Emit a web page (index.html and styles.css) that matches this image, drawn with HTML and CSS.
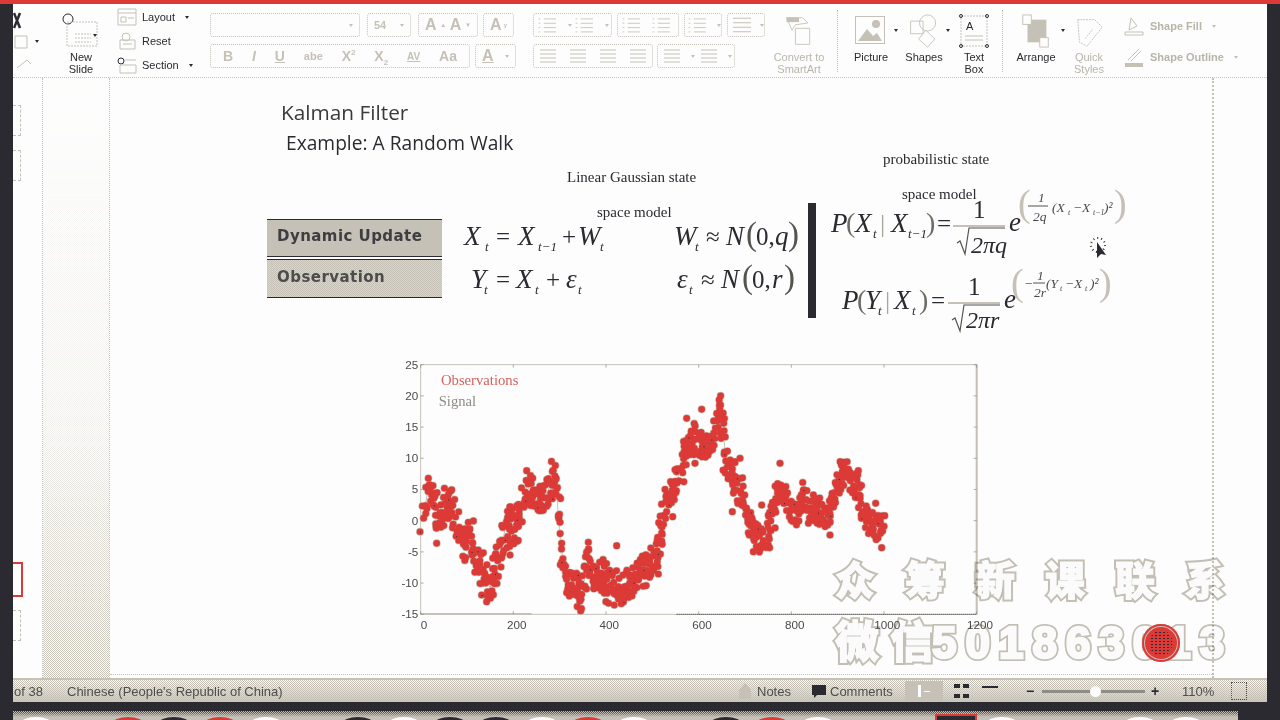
FILE: index.html
```html
<!DOCTYPE html>
<html lang="en">
<head>
  <meta charset="UTF-8">
  <title>Kalman Filter</title>
  <link rel="stylesheet" href="styles.css">
</head>
<body>

  <svg class="defs" width="0" height="0">
    <symbol id="lines" viewBox="0 0 20 16"><path d="M2 2h16M2 6h16M2 10h16M2 14h16"/></symbol>
    <symbol id="bullets" viewBox="0 0 30 20"><path d="M9 3h14M9 8h14M9 13h14M9 18h14M3 3h2M3 8h2M3 13h2M3 18h2"/></symbol>
  </svg>

  <div class="redbar"></div>

  <div class="app">
    <div class="ribbon">
      <div class="clip">
        <svg width="26" height="70" viewBox="0 0 26 70"><path class="dark thick" d="M1 5l6 15M7 5L1 20"/><path d="M2 28h12v12H2zM4 60l10-8M14 52l4 4"/></svg>
        <span class="caret clip-caret"></span>
      </div>

      <div class="newslide">
        <svg width="40" height="38" viewBox="0 0 40 38"><circle class="dark" cx="9" cy="9" r="5"/><path d="M8 12h30v24H8zM16 24h16M16 28h16M16 32h16" stroke-dasharray="2 1"/></svg>
        <span class="caret newslide-caret"></span>
        <span class="label">New<br>Slide</span>
      </div>

      <div class="slidelist">
        <div class="listrow"><svg width="20" height="18" viewBox="0 0 20 18"><path d="M1 1h18v16H1zM1 5h18M4 9h5v5H4zM11 10h6"/></svg><span>Layout</span><span class="caret"></span></div>
        <div class="listrow"><svg width="20" height="18" viewBox="0 0 20 18"><circle cx="9" cy="5" r="4"/><path d="M3 8h15v9H3zM6 12h9"/></svg><span>Reset</span></div>
        <div class="listrow"><svg width="20" height="18" viewBox="0 0 20 18"><circle class="dark" cx="4" cy="5" r="3"/><path d="M3 9h16v8H3zM8 4h11"/></svg><span>Section</span><span class="caret"></span></div>
      </div>

      <div class="fontgroup">
        <div class="rbrow">
          <div class="rb fontname"><span class="caret faded"></span></div>
          <div class="rb fontsize">54<span class="caret faded"></span></div>
          <div class="rb growshrink">A<small>▲</small> A<small>▼</small></div>
          <div class="rb clearfmt">A<small>y</small></div>
        </div>
        <div class="rbrow">
          <div class="rb fontstyles">
            <b>B</b><i>I</i><u>U</u><span class="abe">abe</span><span>X<sup>2</sup></span><span>X<sub>2</sub></span><span class="spacing">AV</span><span>Aa</span>
          </div>
          <div class="rb fontcolor"><u>A</u><span class="caret faded"></span></div>
        </div>
      </div>

      <div class="paragroup">
        <div class="rbrow">
          <div class="rb para-a"><svg width="26" height="18"><use href="#bullets"/></svg><span class="caret faded"></span><svg width="26" height="18"><use href="#bullets"/></svg><span class="caret faded"></span></div>
          <div class="rb para-b"><svg width="26" height="18"><use href="#bullets"/></svg><svg width="26" height="18"><use href="#bullets"/></svg></div>
          <div class="rb para-c"><svg width="26" height="18"><use href="#bullets"/></svg><span class="caret faded"></span></div>
          <div class="rb para-c"><svg width="26" height="18"><use href="#lines"/></svg><span class="caret faded"></span></div>
        </div>
        <div class="rbrow">
          <div class="rb para-d"><svg width="20" height="16"><use href="#lines"/></svg><svg width="20" height="16"><use href="#lines"/></svg><svg width="20" height="16"><use href="#lines"/></svg><svg width="20" height="16"><use href="#lines"/></svg></div>
          <div class="rb para-e"><svg width="24" height="16"><use href="#lines"/></svg><span class="caret faded"></span><svg width="24" height="16"><use href="#lines"/></svg><span class="caret faded"></span></div>
        </div>
      </div>

      <div class="tool smartart">
        <svg width="32" height="34" viewBox="0 0 36 38"><path d="M4 4h18l6 6-14 2-4 6zM14 16h16v18H14z"/><path class="fill" d="M4 4h14v5H4z"/></svg>
        <span class="label faded">Convert to<br>SmartArt</span>
      </div>

      <div class="sep sep-a"></div>

      <div class="tool picture">
        <svg width="34" height="34" viewBox="0 0 34 34"><rect x="1.5" y="2.5" width="29" height="27"/><path class="fill" d="M4 27l9-12 6 7 4-3 5 8z"/><circle class="fill" cx="22" cy="10" r="4"/></svg>
        <span class="caret tool-caret"></span>
        <span class="label">Picture</span>
      </div>
      <div class="tool shapes">
        <svg width="34" height="34" viewBox="0 0 34 38"><circle cx="21" cy="10" r="9"/><path d="M2 8h14v14H2zM19 18l10 10-8 9-10-9z"/></svg>
        <span class="caret tool-caret"></span>
        <span class="label">Shapes</span>
      </div>
      <div class="tool textbox">
        <svg width="30" height="34" viewBox="0 0 30 34"><rect x="2" y="2" width="26" height="30" stroke-dasharray="2 1"/><circle class="dark" cx="2" cy="2" r="1.5"/><circle class="dark" cx="28" cy="2" r="1.5"/><circle class="dark" cx="2" cy="32" r="1.5"/><circle class="dark" cx="28" cy="32" r="1.5"/><path d="M6 22h18M6 26h18"/><text class="boxa" x="7" y="16">A</text></svg>
        <span class="label">Text<br>Box</span>
      </div>

      <div class="sep sep-b"></div>

      <div class="tool arrange">
        <svg width="30" height="34" viewBox="0 0 30 36"><path class="fill" d="M6 6h20v24H6z"/><rect class="paper" x="1" y="1" width="9" height="10"/><rect class="paper" x="19" y="25" width="9" height="10"/></svg>
        <span class="caret tool-caret"></span>
        <span class="label">Arrange</span>
      </div>
      <div class="tool quick">
        <svg width="34" height="34" viewBox="0 0 36 36" stroke-dasharray="2 1"><path d="M6 6h18l8 8-16 20-8-4z"/><path d="M14 26l8-10"/></svg>
        <span class="label faded">Quick<br>Styles</span>
      </div>
      <div class="shapelist">
        <div class="listrow faded"><svg width="22" height="22" viewBox="0 0 22 22"><path d="M8 3l6 8-8 4zM2 17h18v3H2z"/></svg><span>Shape Fill</span><span class="caret faded"></span></div>
        <div class="listrow faded"><svg width="22" height="22" viewBox="0 0 22 22"><path d="M5 14L16 3M8 15L18 5"/><path class="fill" d="M2 17h18v4H2z"/></svg><span>Shape Outline</span><span class="caret faded"></span></div>
      </div>
    </div>

    <div class="workspace">
      <div class="thumbs">
        <div class="thumb"></div>
        <div class="thumb"></div>
        <div class="thumb current"></div>
        <div class="thumb"></div>
      </div>
      <div class="gutter"></div>

      <div class="slide">
        <div class="title">Kalman Filter</div>
        <div class="subtitle">Example: A Random Walk</div>
        <div class="caption cap-linear">Linear Gaussian state</div>
        <div class="caption cap-space1">space model</div>
        <div class="caption cap-prob">probabilistic state</div>
        <div class="caption cap-space2">space model</div>

        <div class="statebox dyn">Dynamic Update</div>
        <div class="statebox obs">Observation</div>
        <div class="divider"></div>

        <svg class="equations" width="1102" height="600" viewBox="110 78 1102 600">
          <text class="mi" x="464" y="245">X</text><text class="ss" x="485" y="251">t</text>
          <text class="mn" x="496" y="245">=</text>
          <text class="mi" x="518" y="245">X</text><text class="ss" x="538" y="251">t−1</text>
          <text class="mn" x="562" y="245">+</text>
          <text class="mi" x="578" y="245">W</text><text class="ss" x="600" y="251">t</text>

          <text class="mi" x="674" y="245">W</text><text class="ss" x="695" y="251">t</text>
          <text class="mn" x="706" y="245">≈</text>
          <text class="mi" x="726" y="245">N</text>
          <text class="paren" x="746" y="245">(</text><text class="mn" x="756" y="245">0,</text><text class="mi" x="775" y="245">q</text><text class="paren" x="788" y="245">)</text>

          <text class="mi" x="471" y="288">Y</text><text class="ss" x="484" y="294">t</text>
          <text class="mn" x="496" y="288">=</text>
          <text class="mi" x="516" y="288">X</text><text class="ss" x="535" y="294">t</text>
          <text class="mn" x="546" y="288">+</text>
          <text class="mi" x="566" y="288">ε</text><text class="ss" x="578" y="294">t</text>

          <text class="mi" x="677" y="288">ε</text><text class="ss" x="689" y="294">t</text>
          <text class="mn" x="701" y="288">≈</text>
          <text class="mi" x="721" y="288">N</text>
          <text class="paren" x="742" y="288">(</text><text class="mn" x="752" y="288">0,</text><text class="mi" x="772" y="288">r</text><text class="paren" x="784" y="288">)</text>

          <text class="mi" x="831" y="232">P</text><text class="parens" x="846" y="232">(</text>
          <text class="mi" x="855" y="232">X</text><text class="ss" x="873" y="238">t</text>
          <text class="bar" x="880" y="232">|</text>
          <text class="mi" x="891" y="232">X</text><text class="ss" x="908" y="238">t−1</text>
          <text class="parens" x="926" y="232">)</text><text class="mn" x="937" y="232">=</text>
          <text class="mn" x="973" y="218">1</text>
          <path class="rule" d="M953 226h52"/>
          <path class="radical" d="M957 243l3-2 5 13 4-26h36"/>
          <text class="mr" x="971" y="253">2πq</text>
          <text class="mi" x="1009" y="231">e</text>
          <text class="bigparen" x="1018" y="216">(</text>
          <text class="ex" x="1038" y="202">1</text><path class="exrule" d="M1028 206h20"/><text class="ex" x="1033" y="221">2q</text>
          <text class="ex" x="1052" y="212">(X</text><text class="exs" x="1068" y="215">t</text><text class="ex" x="1073" y="212">−X</text><text class="exs" x="1093" y="215">t−1</text><text class="ex" x="1104" y="212">)²</text>
          <text class="bigparen" x="1114" y="216">)</text>

          <text class="mi" x="842" y="309">P</text><text class="parens" x="857" y="309">(</text>
          <text class="mi" x="865" y="309">Y</text><text class="ss" x="878" y="315">t</text>
          <text class="bar" x="885" y="309">|</text>
          <text class="mi" x="894" y="309">X</text><text class="ss" x="912" y="315">t</text>
          <text class="parens" x="919" y="309">)</text><text class="mn" x="931" y="309">=</text>
          <text class="mn" x="968" y="295">1</text>
          <path class="rule" d="M948 303h52"/>
          <path class="radical" d="M952 320l3-2 5 13 4-26h36"/>
          <text class="mr" x="966" y="328">2πr</text>
          <text class="mi" x="1004" y="308">e</text>
          <text class="bigparen" x="1011" y="295">(</text>
          <text class="ex" x="1024" y="288">−</text>
          <text class="ex" x="1037" y="280">1</text><path class="exrule" d="M1033 283h12"/><text class="ex" x="1034" y="297">2r</text>
          <text class="ex" x="1046" y="288">(Y</text><text class="exs" x="1060" y="291">t</text><text class="ex" x="1065" y="288">−X</text><text class="exs" x="1085" y="291">t</text><text class="ex" x="1090" y="288">)²</text>
          <text class="bigparen" x="1099" y="295">)</text>
        </svg>

        <svg id="chart" class="chart" width="620" height="290" viewBox="0 0 1860 870"></svg>
      </div>

      <div class="rightpane"></div>
    </div>

    <div class="statusbar">
      <span class="st-count">of 38</span>
      <span class="st-lang">Chinese (People's Republic of China)</span>
      <span class="st-notes"><svg width="14" height="16" viewBox="0 0 14 16"><path class="fill" d="M7 0l6 7v9H1V7z"/></svg>Notes</span>
      <span class="st-comments"><svg width="14" height="13" viewBox="0 0 14 13"><path class="darkfill" d="M0 0h14v10H5l-3 3v-3H0z"/></svg>Comments</span>
      <span class="st-views">
        <span class="st-view active"><i class="bar-w"></i><i class="bar-w small"></i></span>
        <span class="st-view"><i class="sq"></i><i class="sq"></i><i class="sq"></i><i class="sq"></i></span>
        <span class="st-view top"><i class="reader"></i></span>
      </span>
      <span class="st-zoom">
        <span class="zoom-sign">−</span>
        <span class="zoom-track"><i class="zoom-thumb"></i></span>
        <span class="zoom-sign">+</span>
      </span>
      <span class="st-percent">110%</span>
      <span class="st-fit"></span>
    </div>
  </div>

  <div class="dock">
    <i class="d-white"></i><i></i><i class="d-red"></i><i class="d-dark"></i><i class="d-red"></i><i class="d-white"></i><i></i>
    <i class="d-dark"></i><i class="d-white"></i><i class="d-dark"></i><i class="d-dark"></i><i class="d-white"></i><i class="d-red"></i><i class="d-white"></i>
    <i></i><i class="d-dark"></i><i class="d-red"></i><i class="d-white"></i><i></i><i></i><i class="d-box"></i><i class="d-white"></i>
    <i></i><i></i><i class="d-white"></i><i class="d-white"></i>
  </div>

  <div class="watermark">
    <div class="wm-top"><span class="wm-t wm-thin" data-t="众筹新课联系">众筹新课联系</span></div>
    <div class="wm-bottom"><span class="wm-t wm-thin wm-cjk" data-t="微信">微信</span><span class="wm-t" data-t="501863013">501863013</span></div>
  </div>

  <div class="recdot"></div>

  <svg class="cursor" width="24" height="26" viewBox="0 0 24 26">
    <circle class="cursor-ring" cx="9" cy="9" r="7"/>
    <path class="cursor-arrow" d="M8 6l0 16 4-4 5 1z"/>
  </svg>

  <script src="chart.js"></script>
</body>
</html>
```

FILE: styles.css
```css
body {
  margin: 0;
  width: 1280px;
  height: 720px;
  position: relative;
  overflow: hidden;
  background: #2a2a30;
  font-family: 'Liberation Sans', sans-serif;
  color: #2a2a30;
}

svg {
  stroke: #c5c1b6;
  fill: none;
  flex-shrink: 0;
}

svg .fill { fill: #c5c1b6; stroke: none; }
svg .dark { stroke: #2a2a30; }
svg .thick { stroke-width: 2.5; }
svg .darkfill { fill: #2a2a30; stroke: none; }
svg .paper { fill: #fdfdfd; }
.defs { position: absolute; }

.redbar {
  height: 4px;
  background: #dc3a37;
}

.app {
  margin-left: 13px;
  width: 1254px;
  height: 698px;
  display: flex;
  flex-direction: column;
  background: #fdfdfd;
}

/* ribbon */
.ribbon {
  height: 74px;
  flex-shrink: 0;
  display: flex;
  align-items: flex-start;
  box-sizing: border-box;
  border-bottom: 1px dotted #c5c1b6;
  position: relative;
}

.caret {
  display: inline-block;
  width: 0;
  height: 0;
  border-left: 2.5px solid transparent;
  border-right: 2.5px solid transparent;
  border-top: 3px solid #2a2a30;
  margin-left: 5px;
  vertical-align: middle;
}

.caret.faded { border-top-color: #c5c1b6; }

.label {
  font-size: 11px;
  line-height: 12px;
  text-align: center;
  display: block;
}

.faded { color: #b9b5a9; }

.clip {
  width: 34px;
  flex-shrink: 0;
  position: relative;
  padding-top: 4px;
}

.clip-caret { position: absolute; left: 17px; top: 36px; }

.newslide {
  width: 68px;
  margin-top: 6px;
  position: relative;
  flex-shrink: 0;
}

.newslide svg { margin-left: 12px; display: block; }
.newslide-caret { position: absolute; left: 46px; top: 24px; margin: 0; }
.newslide .label { margin-top: 3px; margin-left: 0; width: 68px; }

.slidelist {
  width: 93px;
  margin-left: 2px;
  padding-top: 3px;
  display: flex;
  flex-direction: column;
  gap: 4px;
  flex-shrink: 0;
}

.listrow {
  display: flex;
  align-items: center;
  gap: 5px;
  font-size: 11px;
  height: 20px;
}

.fontgroup {
  width: 306px;
  padding-top: 9px;
  display: flex;
  flex-direction: column;
  gap: 7px;
  flex-shrink: 0;
}

.paragroup {
  width: 236px;
  margin-left: 17px;
  padding-top: 9px;
  display: flex;
  flex-direction: column;
  gap: 7px;
  flex-shrink: 0;
}

.rbrow {
  display: flex;
  gap: 5px;
}

.rb {
  height: 24px;
  box-sizing: border-box;
  border: 1px dotted #c5c1b6;
  border-radius: 3px;
  display: flex;
  align-items: center;
  justify-content: space-between;
  padding: 0 6px;
  color: #c5c1b6;
  font-weight: bold;
  font-size: 14px;
  flex-shrink: 0;
}

.rb small { font-size: 6px; }
.rb svg { width: auto; }
.fontname { width: 150px; justify-content: flex-end; }
.fontsize { width: 44px; font-size: 11px; margin-left: 2px; }
.growshrink { width: 60px; margin-left: 2px; font-size: 16px; }
.clearfmt { width: 31px; font-size: 16px; }
.fontstyles { width: 260px; padding: 0 12px; }
.fontstyles .abe { font-size: 11px; }
.fontstyles .spacing { font-size: 10px; text-decoration: underline; }
.fontstyles sup, .fontstyles sub { font-size: 8px; line-height: 0; }
.fontcolor { width: 41px; font-size: 16px; }

.rb use { stroke: #c5c1b6; }
.para-a { width: 79px; padding: 0 2px; }
.para-b { width: 62px; padding: 0 2px; }
.para-c { width: 38px; padding: 0 1px; }
.para-d { width: 120px; padding: 0 4px; }
.para-e { width: 78px; padding: 0 2px; margin-left: -1px; }

.tool {
  position: relative;
  flex-shrink: 0;
  padding-top: 10px;
  display: flex;
  flex-direction: column;
  align-items: center;
}

.tool svg { height: 34px; }
.tool .label { margin-top: 3px; white-space: nowrap; }
.tool-caret { position: absolute; top: 25px; right: -8px; margin: 0; }

.smartart { width: 58px; margin-left: 1px; }
.sep {
  width: 0;
  height: 62px;
  margin-top: 6px;
  border-left: 1px dotted #c5c1b6;
  flex-shrink: 0;
}
.sep-a { margin-left: 9px; }
.picture { width: 38px; margin-left: 14px; }
.shapes { width: 36px; margin-left: 16px; }
.textbox { width: 28px; margin-left: 18px; }
.sep-b { margin-left: 14px; }
.arrange { width: 42px; margin-left: 12px; }
.quick { width: 32px; margin-left: 16px; }
.boxa {
  font-size: 11px;
  fill: #2a2a30;
  stroke: none;
  font-family: 'Liberation Sans', sans-serif;
}

.shapelist {
  margin-left: 18px;
  padding-top: 12px;
  display: flex;
  flex-direction: column;
  gap: 11px;
  font-weight: bold;
}

/* workspace */
.workspace {
  height: 600px;
  flex-shrink: 0;
  display: flex;
}

.thumbs {
  width: 30px;
  flex-shrink: 0;
  box-sizing: border-box;
  padding-top: 27px;
  border-right: 1px dotted #c5c1b6;
  display: flex;
  flex-direction: column;
}

.thumb {
  width: 8px;
  height: 31px;
  box-sizing: border-box;
  border: 1px dashed #c5c1b6;
  border-left: none;
  margin-bottom: 14px;
}

.thumb:nth-child(3) { margin-top: 367px; }

.thumb.current {
  width: 10px;
  height: 35px;
  border: 2px solid #dc3a37;
  border-left: none;
  margin-bottom: 13px;
}

.gutter {
  width: 67px;
  flex-shrink: 0;
  background:
    linear-gradient(#fdfdfd 0, rgba(253, 253, 253, 0.75) 60%, rgba(253, 253, 253, 0) 100%),
    repeating-conic-gradient(#c5c1b6 0 25%, #fdfdfd 0 50%) 0 0 / 2px 2px;
  border-right: 1px dotted #c5c1b6;
  box-sizing: border-box;
}

.slide {
  width: 1102px;
  flex-shrink: 0;
  position: relative;
  box-sizing: border-box;
  border-bottom: 1px dotted #c5c1b6;
  margin-bottom: 3px;
}

.rightpane {
  width: 55px;
  flex-shrink: 0;
  border-left: 2px dotted #c5c1b6;
  box-sizing: border-box;
}

.title, .subtitle {
  position: absolute;
  font-family: 'Open Sans', sans-serif;
  white-space: nowrap;
}

.title { left: 171px; top: 20px; font-size: 20.8px; line-height: 28px; color: #3a3a3e; }
.subtitle { left: 176px; top: 52px; font-size: 19.2px; line-height: 26px; color: #2a2a30; }

.caption {
  position: absolute;
  font-family: 'Liberation Serif', serif;
  font-size: 15px;
  line-height: 16px;
  white-space: nowrap;
}

.cap-linear { left: 457px; top: 91px; }
.cap-space1 { left: 487px; top: 126px; }
.cap-prob { left: 773px; top: 73px; }
.cap-space2 { left: 792px; top: 108px; }

.statebox {
  position: absolute;
  left: 157px;
  width: 175px;
  box-sizing: border-box;
  padding-left: 10px;
  background: #c5c1b6;
  border-top: 1px solid #2a2a30;
  border-bottom: 1px solid #2a2a30;
  font-family: 'DejaVu Sans', sans-serif;
  font-weight: bold;
  font-size: 15px;
  letter-spacing: 0.45px;
  color: #3e3e42;
  display: flex;
  align-items: center;
  padding-bottom: 4px;
}

.dyn { top: 141px; height: 38px; }
.obs {
  top: 181px;
  height: 39px;
  color: #4d4c4c;
  background: repeating-conic-gradient(#c5c1b6 0 25%, #d8d5cc 0 50%) 0 0 / 2px 2px;
}

.divider {
  position: absolute;
  left: 698px;
  top: 125px;
  width: 8px;
  height: 115px;
  background: #2a2a30;
}

.equations {
  position: absolute;
  left: 0;
  top: 0;
  stroke: none;
  fill: #2a2a30;
  font-family: 'Liberation Serif', serif;
}

.mi { font-style: italic; font-size: 27px; }
.mr { font-style: italic; font-size: 24px; }
.mn { font-size: 25px; }
.ss { font-style: italic; font-size: 13px; }
.paren { font-size: 33px; fill: #55534f; }
.parens { font-size: 28px; fill: #6d6b66; }
.bar { font-size: 26px; fill: #a8a59b; }
.rule { stroke: #c5c1b6; stroke-width: 2; fill: none; }
.radical { stroke: #55534f; stroke-width: 1.2; fill: none; }
.ex { font-style: italic; font-size: 13.5px; fill: #4a4a4c; }
.exs { font-style: italic; font-size: 8px; fill: #4a4a4c; }
.exrule { stroke: #55534f; stroke-width: 1; fill: none; }
.bigparen { font-size: 38px; fill: #c5c1b6; }

.chart {
  position: absolute;
  left: 280px;
  top: 272px;
  stroke: none;
}

.chart-frame { fill: none; stroke: #c5c1b6; stroke-width: 3; }
.chart-right { stroke: #c5c1b6; stroke-width: 6; }
.chart-bottom { stroke: #2a2a30; stroke-width: 3; stroke-dasharray: 3 3; }
.chart-bottomleft { stroke: #c5c1b6; stroke-width: 6; }
.chart-tick { stroke: #8a8880; stroke-width: 2; }
.chart-label {
  font-family: 'Liberation Sans', sans-serif;
  font-size: 35px;
  fill: #4a4a4c;
}

.legend {
  font-family: 'Liberation Serif', serif;
  font-size: 44px;
}
.legend-obs { fill: #d4625e; }
.legend-sig { fill: #8f8c84; }
.signal { fill: none; stroke: #c5c1b6; stroke-width: 3; }
.halo { fill: #c5c1b6; }
.dot { fill: #dc3a37; }
.speck { fill: #2a2a30; }

/* status bar */
.statusbar {
  height: 24px;
  flex-shrink: 0;
  box-sizing: border-box;
  border-top: 2px solid #c5c1b6;
  background:
    linear-gradient(rgba(197, 193, 182, 0), rgba(197, 193, 182, 0.9)),
    repeating-conic-gradient(#c5c1b6 0 25%, #fdfdfd 0 50%) 0 0 / 2px 2px;
  display: flex;
  align-items: center;
  font-size: 13px;
  color: #4f4e4c;
  position: relative;
}

.statusbar > span { flex-shrink: 0; display: flex; align-items: center; }
.st-count { margin-left: 1px; width: 53px; }
.st-lang { width: 671px; }
.st-notes { width: 74px; gap: 5px; }
.st-comments { width: 93px; gap: 4px; }
.st-views { width: 117px; height: 22px; gap: 7px; }
.st-view {
  width: 22px;
  height: 20px;
  display: flex;
  flex-wrap: wrap;
  align-items: center;
  justify-content: center;
  gap: 1px 3px;
}
.st-view.active { width: 38px; background: #c5c1b6; gap: 3px; flex-wrap: nowrap; }
.bar-w { width: 3px; height: 12px; background: #fdfdfd; }
.bar-w.small { width: 6px; height: 1px; }
.sq { width: 6px; height: 4px; background: #2a2a30; }
.reader { width: 16px; height: 8px; border-top: 2px solid #2a2a30; }
.st-zoom { width: 137px; gap: 6px; margin-left: 4px; }
.zoom-sign { font-size: 14px; font-weight: bold; color: #2a2a30; width: 10px; }
.zoom-track {
  width: 103px;
  height: 3px;
  background: #8f8c84;
  position: relative;
  display: block;
}
.zoom-thumb {
  position: absolute;
  left: 48px;
  top: -4px;
  width: 11px;
  height: 11px;
  border-radius: 50%;
  background: #fdfdfd;
}
.st-percent { width: 49px; margin-left: 19px; }
.st-fit {
  width: 14px;
  height: 16px;
  border: 1px dotted #4f4e4c;
}

/* dock */
.dock {
  position: absolute;
  left: 13px;
  top: 711px;
  width: 1225px;
  height: 9px;
  background:
    linear-gradient(rgba(197, 193, 182, 0), #c5c1b6 6px),
    repeating-conic-gradient(#2a2a30 0 25%, #c5c1b6 0 50%) 0 0 / 2px 2px;
  display: grid;
  grid-template-columns: repeat(26, 46px);
  overflow: hidden;
}

.dock i {
  display: block;
  margin: 6px 7px 0;
  height: 14px;
  border-radius: 50% 50% 0 0;
}

.d-white { background: #fdfdfd; }
.d-red { background: #dc3a37; }
.d-dark { background: #2a2a30; }
.dock .d-box { background: #2a2a30; border: 2px solid #dc3a37; border-radius: 0; margin: 3px 2px 0; }

/* overlays */
.watermark {
  position: absolute;
  left: 835px;
  top: 553px;
  color: #fdfdfd;
  white-space: nowrap;
  font-weight: 900;
  mix-blend-mode: multiply;
}

.wm-t {
  position: relative;
  display: inline-block;
  -webkit-text-stroke: 6px #c5c1b6;
  paint-order: stroke fill;
}

.wm-t::after {
  content: attr(data-t);
  position: absolute;
  left: 0;
  top: 0;
  -webkit-text-stroke: 2.5px #fdfdfd;
}

.wm-thin { -webkit-text-stroke-width: 5px; }
.wm-thin::after { -webkit-text-stroke-width: 1px; }

.wm-top {
  font-family: 'Noto Sans CJK SC', sans-serif;
  font-size: 40px;
  line-height: 50px;
  letter-spacing: 30px;
}

.wm-bottom {
  font-family: 'Liberation Sans', sans-serif;
  font-size: 44px;
  line-height: 60px;
  letter-spacing: 9px;
  margin-top: 6px;
}

.wm-cjk {
  font-family: 'Noto Sans CJK SC', sans-serif;
  font-size: 44px;
  letter-spacing: 11px;
  margin-right: -13px;
}

.recdot {
  position: absolute;
  left: 1142px;
  top: 624px;
  width: 38px;
  height: 38px;
  border-radius: 50%;
  background: #dc3a37;
  box-shadow: inset 0 0 0 2px #dc3a37, inset 0 0 0 3px #c5c1b6;
  display: flex;
  align-items: center;
  justify-content: center;
}

.recdot::after {
  content: "";
  width: 22px;
  height: 24px;
  border-radius: 40%;
  background: radial-gradient(#2a2a30 0.7px, transparent 1px) 0 0 / 4px 3px;
}

.cursor {
  position: absolute;
  left: 1089px;
  top: 236px;
}

.cursor-ring { fill: none; stroke: #2a2a30; stroke-width: 2; stroke-dasharray: 1 3; }
.cursor-arrow { fill: #2a2a30; stroke: none; }
```

FILE: chart.js
```js
// observations are sampled around a band traced from the plot, units are 1/3 px
const band = [
  [100, 505, 45], [115, 410, 55], [130, 440, 40], [140, 530, 50], [160, 490, 30], [185, 430, 60],
  [200, 530, 30], [215, 580, 50], [240, 560, 50], [265, 640, 40], [290, 680, 60], [300, 715, 40],
  [320, 650, 40], [345, 540, 60], [370, 530, 60], [395, 500, 40], [410, 410, 50], [430, 430, 50],
  [450, 470, 50], [475, 420, 50], [490, 375, 45], [500, 420, 30], [505, 500, 15], [512, 580, 25],
  [520, 640, 30], [535, 690, 45], [550, 710, 45], [575, 745, 40], [590, 640, 45], [610, 660, 50],
  [640, 690, 50], [660, 700, 60], [690, 735, 40], [720, 700, 40], [750, 670, 50], [780, 650, 40],
  [800, 610, 40], [812, 560, 20], [825, 470, 45], [845, 420, 30], [870, 370, 35], [885, 300, 50],
  [905, 270, 50], [940, 280, 40], [960, 300, 40], [975, 230, 40], [990, 150, 30], [1000, 230, 30],
  [1005, 310, 30], [1015, 350, 40], [1040, 400, 40], [1055, 430, 40], [1065, 470, 25], [1080, 520, 30],
  [1100, 560, 50], [1125, 570, 40], [1145, 510, 35], [1170, 400, 35], [1195, 470, 30], [1220, 490, 40],
  [1240, 430, 40], [1260, 470, 50], [1285, 490, 40], [1310, 500, 30], [1330, 450, 30], [1350, 390, 30],
  [1365, 340, 30], [1385, 410, 40], [1405, 410, 40], [1420, 490, 25], [1450, 530, 40], [1482, 530, 35]
];

const outliers = [
  [140, 580], [890, 205], [935, 178], [915, 340], [848, 500], [805, 672], [275, 735], [290, 755],
  [360, 615], [595, 577], [680, 587], [410, 362], [1050, 325], [1170, 340], [1115, 465], [1027, 485],
  [1090, 605], [1320, 555], [1405, 362], [1475, 593], [1457, 460], [510, 517], [505, 497], [515, 580]
];

const NS = 'http://www.w3.org/2000/svg';
const chart = document.getElementById('chart');

function add(tag, attrs, text) {
  const el = document.createElementNS(NS, tag);
  for (const key in attrs) el.setAttribute(key, attrs[key]);
  if (text) el.textContent = text;
  chart.appendChild(el);
  return el;
}

let seed = 7;
function rand() {
  seed = (seed * 16807) % 2147483647;
  return seed / 2147483647;
}

function bandAt(x) {
  for (let i = 1; i < band.length; i++) {
    if (x <= band[i][0]) {
      const a = band[i - 1], b = band[i];
      const t = (x - a[0]) / (b[0] - a[0]);
      return [a[1] + (b[1] - a[1]) * t, a[2] + (b[2] - a[2]) * t];
    }
  }
  return [band[band.length - 1][1], band[band.length - 1][2]];
}

const points = [];
for (let i = 0; i < 1000; i++) {
  const x = 100 + i * 1.382;
  const sparse = x > 505 && x < 520; // the fall near 290 is sparse
  if (sparse && i % 3) continue;
  const [y, spread] = bandAt(x);
  const jitter = sparse ? 0 : (rand() * 2 - 1) * 10;
  points.push([x + jitter, y + (rand() * 2 - 1) * Math.max(spread * 1.15 - 4, 2)]);
}
outliers.forEach(p => points.push(p));

// frame and ticks
add('rect', { class: 'chart-frame', x: 92, y: 44, width: 1668, height: 749 });
add('line', { class: 'chart-right', x1: 1760, y1: 44, x2: 1760, y2: 793 });
add('line', { class: 'chart-bottomleft', x1: 92, y1: 792, x2: 425, y2: 792 });
add('line', { class: 'chart-bottom', x1: 860, y1: 793, x2: 1760, y2: 793 });

[25, 20, 15, 10, 5, 0, -5, -10, -15].forEach((value, i) => {
  const y = 44 + i * 93.6;
  add('line', { class: 'chart-tick', x1: 92, y1: y, x2: 101, y2: y });
  add('line', { class: 'chart-tick', x1: 1751, y1: y, x2: 1760, y2: y });
  add('text', { class: 'chart-label', x: 85, y: y + 12, 'text-anchor': 'end' }, String(value));
});

[0, 200, 400, 600, 800, 1000, 1200].forEach((value, i) => {
  const x = 92 + i * 278;
  add('line', { class: 'chart-tick', x1: x, y1: 793, x2: x, y2: 784 });
  add('line', { class: 'chart-tick', x1: x, y1: 44, x2: x, y2: 53 });
  add('text', { class: 'chart-label', x: x + 10, y: 837, 'text-anchor': 'middle' }, String(value));
});

add('text', { class: 'legend legend-obs', x: 153, y: 106 }, 'Observations');
add('text', { class: 'legend legend-sig', x: 146, y: 168 }, 'Signal');

// signal line, halo under the dots, then the dots
add('polyline', { class: 'signal', points: band.map(b => b[0] + ',' + b[1]).join(' ') });
points.forEach(p => add('circle', { class: 'halo', cx: p[0], cy: p[1], r: 12 }));
points.forEach(p => add('circle', { class: 'dot', cx: p[0], cy: p[1], r: 10 }));
points.forEach((p, i) => {
  if (i % 25 === 0) add('rect', { class: 'speck', x: p[0], y: p[1], width: 3, height: 3 });
});
```
